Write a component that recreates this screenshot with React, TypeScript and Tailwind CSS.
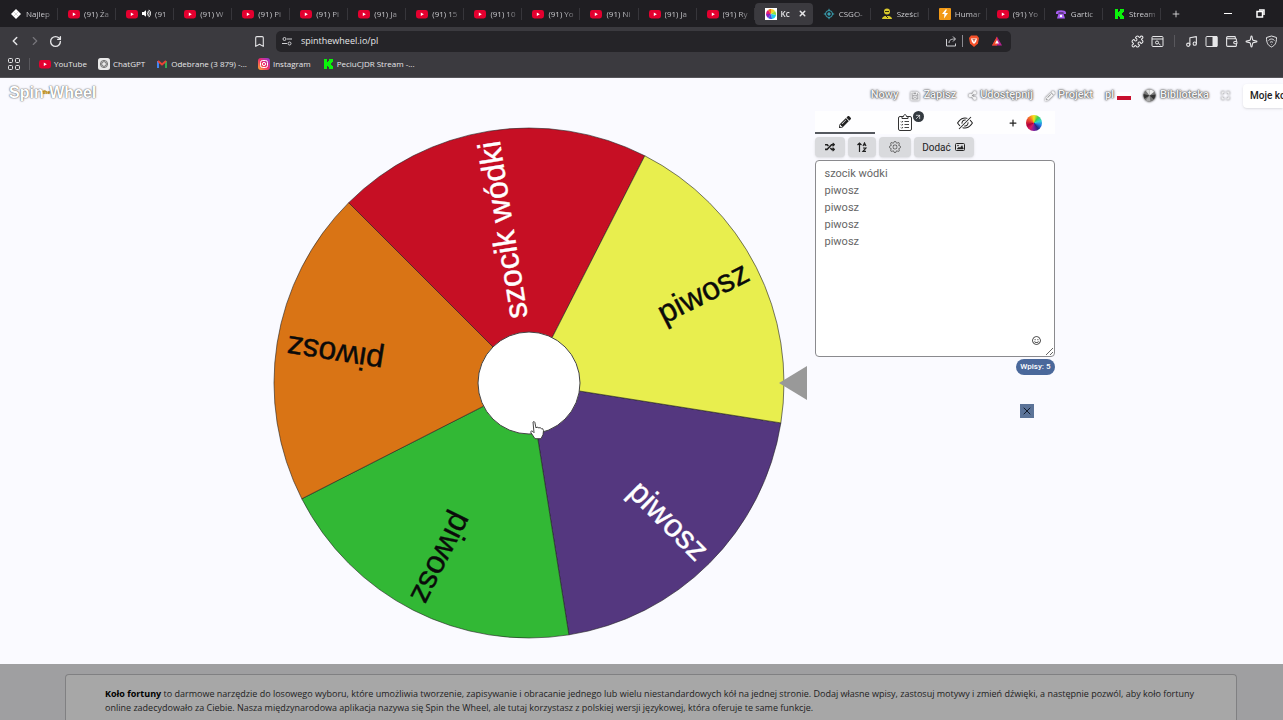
import React, { useState } from 'react';
import { ArrowUpRight, Bookmark, ChevronLeft, ChevronRight, Music, Puzzle, RotateCw, Sparkle, Plus, X, Wallet } from 'lucide-react';
import { FaExpand, FaPencilAlt, FaRandom, FaRegSave, FaRegSmile, FaShareAlt, FaVolumeUp } from 'react-icons/fa';
import { BsEyeSlash, BsGear } from 'react-icons/bs';

const YouTubeIcon = () => (
  <svg viewBox="0 0 12 12" className="size-3 shrink-0">
    <rect y="2" width="12" height="8.4" rx="2.4" fill="#e4002f" />
    <path d="M4.8 4.4v3.6l3-1.8z" fill="#fff" />
  </svg>
);

const KickIcon = () => (
  <svg viewBox="0 0 12 12" className="size-3 shrink-0">
    <path d="M2 1h3v3h1V3h1V1h4v3h-1v1H9v2h1v1h1v3H7V9H6V8H5v3H2z" fill="#0bf30b" />
  </svg>
);

const WheelIcon = () => (
  <svg viewBox="0 0 12 12" className="size-3 shrink-0">
    <rect width="12" height="12" fill="#fff" />
    <path d="M6 6V1a5 5 0 0 1 4 2z" fill="#f5d328" />
    <path d="M6 6l4-3a5 5 0 0 1 1 4z" fill="#8fe23d" />
    <path d="M6 6l5 1a5 5 0 0 1-4 4z" fill="#20c9e8" />
    <path d="M6 6l1 5a5 5 0 0 1-4-1z" fill="#3553e8" />
    <path d="M6 6l-3 4a5 5 0 0 1-2-4z" fill="#8420bf" />
    <path d="M6 6H1a5 5 0 0 1 2-4z" fill="#e11b78" />
    <path d="M6 6L3 2a5 5 0 0 1 3-1z" fill="#f26a1c" />
  </svg>
);

const DiceIcon = () => (
  <svg viewBox="0 0 12 12" className="size-3 shrink-0">
    <path d="M6 1l5 5-5 5-5-5z" fill="#fff" />
    <path d="M4 4l4 4M8 4L4 8" stroke="#bbb" strokeWidth=".6" />
  </svg>
);

const TargetIcon = () => (
  <svg viewBox="0 0 12 12" className="size-3 shrink-0" fill="none" stroke="#3aa3b5">
    <circle cx="6" cy="6" r="3.5" />
    <path d="M6 .8v2M6 9.200v2M.8 6h2M9.200 6h2" />
    <circle cx="6" cy="6" r="1.2" fill="#3aa3b5" />
  </svg>
);

const PersonIcon = () => (
  <svg viewBox="0 0 12 12" className="size-3 shrink-0" fill="#d9c92c">
    <circle cx="6" cy="3.6" r="3" />
    <path d="M1 11c0-2 2-2.6 3-3h4c1 .4 3 1 3 3z" />
    <path d="M4 3.5h4M5 8l2 2" stroke="#33300c" />
  </svg>
);

const BoltIcon = () => (
  <svg viewBox="0 0 12 12" className="size-3 shrink-0">
    <rect width="12" height="12" rx="1" fill="#f39a16" />
    <path d="M6.5 1.5L3 6h2.400L5 10.500 9 5H6.200L8 1.500z" fill="#fff" />
  </svg>
);

const PhoneIcon = () => (
  <svg viewBox="0 0 12 12" className="size-3 shrink-0">
    <path d="M1 4.5C1 1.5 11 1.5 11 4.5V6H8.500V4.500h-5V6H1z" fill="#a55cf0" />
    <path d="M3.5 5.5h5L10 10.500H2z" fill="#a55cf0" />
    <circle cx="6" cy="8" r="1.2" fill="#fff" />
  </svg>
);

const ChatIcon = () => (
  <svg viewBox="0 0 12 12" className="size-3 shrink-0">
    <rect width="12" height="12" rx="2.5" fill="#e9e9e9" />
    <g fill="none" stroke="#555" strokeWidth=".8">
      <circle cx="6" cy="6" r="3.6" />
      <path d="M6 3.5l2.200 1.200v2.600L6 8.500 3.800 7.300V4.700z" />
    </g>
  </svg>
);

const MailIcon = () => (
  <svg viewBox="0 0 12 12" className="size-3 shrink-0" fill="none" strokeWidth="2">
    <path d="M2 10V3" stroke="#4285f4" />
    <path d="M10 10V3" stroke="#34a853" />
    <path d="M2 3l4 3.500L10 3" stroke="#ea4335" />
  </svg>
);

const InstagramIcon = () => (
  <svg viewBox="0 0 12 12" className="size-3 shrink-0">
    <defs>
      <linearGradient id="insta" x1="0" y1="1" x2="1" y2="0">
        <stop offset="0" stopColor="#fdb32b" />
        <stop offset=".5" stopColor="#ee2a6b" />
        <stop offset="1" stopColor="#8a3ae0" />
      </linearGradient>
    </defs>
    <rect width="12" height="12" rx="3" fill="url(#insta)" />
    <g fill="none" stroke="#fff">
      <rect x="2.5" y="2.5" width="7" height="7" rx="2" />
      <circle cx="6" cy="6" r="1.6" />
    </g>
  </svg>
);

interface Tab {
  title: string;
  icon: React.FC;
  active?: boolean;
  sound?: boolean;
}

const tabs: Tab[] = [
  { title: 'Najlep', icon: DiceIcon },
  { title: '(91) Ża', icon: YouTubeIcon },
  { title: '(91', icon: YouTubeIcon, sound: true },
  { title: '(91) W', icon: YouTubeIcon },
  { title: '(91) Pi', icon: YouTubeIcon },
  { title: '(91) Pi', icon: YouTubeIcon },
  { title: '(91) Ja', icon: YouTubeIcon },
  { title: '(91) 15', icon: YouTubeIcon },
  { title: '(91) 10', icon: YouTubeIcon },
  { title: '(91) Yo', icon: YouTubeIcon },
  { title: '(91) Ni', icon: YouTubeIcon },
  { title: '(91) Ja', icon: YouTubeIcon },
  { title: '(91) Ry', icon: YouTubeIcon },
  { title: 'Kc', icon: WheelIcon, active: true },
  { title: 'CSGO-', icon: TargetIcon },
  { title: 'Sześci', icon: PersonIcon },
  { title: 'Humar', icon: BoltIcon },
  { title: '(91) Yo', icon: YouTubeIcon },
  { title: 'Gartic', icon: PhoneIcon },
  { title: 'Stream', icon: KickIcon },
];

const bookmarks = [
  { label: 'YouTube', icon: YouTubeIcon },
  { label: 'ChatGPT', icon: ChatIcon },
  { label: 'Odebrane (3 879) -...', icon: MailIcon },
  { label: 'Instagram', icon: InstagramIcon },
  { label: 'PeciuCJDR Stream -...', icon: KickIcon },
];

const BrowserChrome = () => (
  <header className="border-b border-[#56555a] bg-[#3b3a3f] font-['Open_Sans',sans-serif] text-[8px] text-[#e6e6e8]">
    <div className="flex h-[27px] items-center bg-[#1f1e22]">
      <div className="flex min-w-0 flex-1" role="tablist">
        {tabs.map(({ title, icon: Icon, active, sound }, i) => (
          <button
            key={i}
            role="tab"
            aria-selected={!!active}
            className={`flex h-[22px] min-w-0 flex-1 basis-0 items-center gap-1 text-left ${
              active ? 'rounded bg-[#3b3a3f] font-semibold' : 'font-medium text-[#cbcbcf]'
            }`}
          >
            <span className="pl-[10px]"><Icon /></span>
            {sound && <FaVolumeUp className="size-[9px] shrink-0 text-white" />}
            <span className="min-w-0 flex-1 whitespace-nowrap [mask-image:linear-gradient(to_right,#000_60%,#0004)]">{title}</span>
            {active ? <X className="mr-[6px] size-[9px] shrink-0" strokeWidth={4} /> : <span className="h-3 w-px shrink-0 bg-[#37363b]" />}
          </button>
        ))}
      </div>
      <div className="flex w-[122px] items-center">
        <button aria-label="Nowa karta" className="ml-[10px]"><Plus size={10} /></button>
        <button aria-label="Minimalizuj" className="ml-[43px] h-px w-2 bg-white" />
        <button aria-label="Przywróć" className="ml-6">
          <svg viewBox="0 0 9 9" className="size-[9px]" fill="none" stroke="#fff" strokeWidth="1.5">
            <rect x="1" y="2.5" width="5.5" height="5.5" />
            <path d="M3 1h5v5" />
          </svg>
        </button>
      </div>
    </div>

    <div className="flex h-7 items-center pr-[5px] pl-2">
      <button aria-label="Wstecz"><ChevronLeft size={14} strokeWidth={2.5} /></button>
      <button aria-label="Dalej" className="ml-[6px] text-[#77767b]"><ChevronRight size={14} /></button>
      <button aria-label="Odśwież" className="ml-[7px]"><RotateCw size={13} strokeWidth={2.5} /></button>
      <button aria-label="Zakładka" className="ml-[191px]"><Bookmark size={13} strokeWidth={2} /></button>
      <div className="ml-[10px] flex h-[21px] w-[735px] items-center rounded-[5px] bg-[#252428] px-[6px]">
        <svg viewBox="0 0 10 10" className="size-[10px]" fill="none" stroke="#d0d0d4">
          <circle cx="2.5" cy="3" r="1.5" />
          <path d="M5 3h5M0 7.500h5" />
          <circle cx="7.5" cy="7.5" r="1.5" />
        </svg>
        <input
          aria-label="Adres"
          defaultValue="spinthewheel.io/pl"
          className="ml-[9px] min-w-0 flex-1 bg-transparent text-[9px] font-medium outline-none"
        />
        <svg viewBox="0 0 12 12" className="size-3" fill="none" stroke="#d0d0d4">
          <path d="M1.500 4v7h9V8.500M4 8c0-3 2-4 6-4M8 1.500L10.500 4 8 6.500" />
        </svg>
        <span className="mx-[5px] h-3 w-px bg-[#8b8a90]" />
        <svg viewBox="0 0 12 12" className="size-3">
          <path d="M3 .5h6l2 2.500-1 5.500L6 12 2 8.500 1 3z" fill="#f5512a" />
          <path d="M3 3.500h6L8 7 6 9 4 7z" fill="#fff" />
          <path d="M4.500 4.500l1.500 1 1.500-1M6 6v1" stroke="#f5512a" strokeWidth=".7" />
        </svg>
        <svg viewBox="0 0 12 12" className="mr-[2px] ml-[11px] size-3">
          <path d="M6 1.500L11 10.500H1z" fill="#b5218e" />
          <path d="M6 1.500L1 10.500h5z" fill="#f04b24" />
          <path d="M6 5l2 3.500H4z" fill="#fff" />
        </svg>
      </div>
      <div className="ml-auto flex items-center gap-[7px]">
        <Puzzle size={13} />
        <svg viewBox="0 0 13 13" className="size-[13px]" fill="none" stroke="currentColor">
          <rect x="1" y="1.5" width="11" height="10" rx="1" />
          <path d="M1 4h11M7.500 8.500l2 1.500" />
          <circle cx="6" cy="7.5" r="1.5" />
        </svg>
        <span className="mx-[3px] h-3 w-px bg-[#59585d]" />
        <Music size={13} />
        <svg viewBox="0 0 13 13" className="size-[13px]" fill="none" stroke="currentColor">
          <rect x="1" y="1.5" width="11" height="10" rx="1" />
          <path d="M8 1.500h4v10H8z" fill="currentColor" />
        </svg>
        <Wallet size={13} />
        <Sparkle size={13} />
        <svg viewBox="0 0 13 13" className="size-[13px]" fill="none" stroke="currentColor">
          <path d="M6.500 1L11.500 2.500C11.500 8 10 10.500 6.500 12 3 10.500 1.500 8 1.500 2.500z" />
          <path d="M3.500 5.500c2-2 4-2 6 0M5 7.500c1-1 2-1 3 0M6.500 9v.5" />
        </svg>
      </div>
    </div>

    <nav className="flex h-[22px] items-center pb-1 pl-2">
      <button aria-label="Aplikacje">
        <svg viewBox="0 0 12 12" className="size-3" fill="none" stroke="currentColor">
          <rect x=".5" y=".5" width="4" height="4" rx="1" />
          <rect x="7.5" y=".5" width="4" height="4" rx="1" />
          <rect x=".5" y="7.5" width="4" height="4" rx="1" />
          <rect x="7.5" y="7.5" width="4" height="4" rx="1" />
        </svg>
      </button>
      <span className="ml-[9px] h-3 w-px bg-[#59585d]" />
      <div className="ml-[9px] flex gap-[11px]">
        {bookmarks.map(({ label, icon: Icon }) => (
          <a key={label} href="#" className="flex items-center gap-[3px] font-medium">
            <Icon />
            {label}
          </a>
        ))}
      </div>
    </nav>
  </header>
);

const navLink =
  'flex items-center gap-[3px] text-[#f4f4f6] [text-shadow:0_0_1px_#444,0_0_2px_#555,0_0_3px_#888] [&_svg]:drop-shadow-[0_0_1px_#333]';

const SiteNav = () => (
  <nav className="flex h-[31px] items-center pt-1 pl-[9px] text-[11px] font-medium">
    <a
      href="#"
      className="flex items-center pb-[6px] font-['Liberation_Sans',sans-serif] text-base font-bold text-white [text-shadow:0_0_1px_#555,0_0_2px_#777]"
    >
      Spin
      <span className="-mx-px text-[5px] text-[#b8860b] [text-shadow:0_0_1px_#b8860b]">the</span>
      Wheel
    </a>
    <div className="ml-auto flex items-center gap-3">
      <a href="#" className={navLink}>Nowy</a>
      <a href="#" className={navLink}><FaRegSave size={10} />Zapisz</a>
      <a href="#" className={navLink}><FaShareAlt size={9} />Udostępnij</a>
      <a href="#" className={navLink}><FaPencilAlt size={10} />Projekt</a>
      <a href="#" className={navLink}>
        pl
        <span className="flex h-2 w-[14px] flex-col bg-white pt-1">
          <span className="flex-1 bg-[#c8102e]" />
        </span>
      </a>
      <a href="#" className={navLink}>
        <svg viewBox="0 0 14 14" className="mr-px size-[13px]">
          <circle cx="7" cy="7" r="6.5" fill="#777" />
          <path d="M7 7V.5A6.500 6.500 0 0 1 12 3z" fill="#eee" />
          <path d="M7 7l6.500-1a6.500 6.500 0 0 1-2 5z" fill="#333" />
          <path d="M7 7l1 6.500a6.500 6.500 0 0 1-5-1.500z" fill="#aaa" />
          <path d="M7 7L.7 5.500a6.500 6.500 0 0 0 1 5z" fill="#333" />
          <path d="M7 7L3 2a6.500 6.500 0 0 1 4-1.500z" fill="#ddd" />
        </svg>
        Biblioteka
      </a>
      <a href="#" aria-label="Pełny ekran" className={navLink}><FaExpand size={9} /></a>
      <a href="#" className="ml-px h-6 w-10 rounded-l bg-white pl-[7px] text-[10px] leading-6 whitespace-nowrap text-[#222] shadow">
        Moje ko
      </a>
    </div>
  </nav>
);

const slices = [
  { label: 'piwosz', fill: '#54377f', color: '#ffffff', angle: 45 },
  { label: 'piwosz', fill: '#32b835', color: '#0a0a0a', angle: 117 },
  { label: 'piwosz', fill: '#d97415', color: '#0a0a0a', angle: 189 },
  { label: 'szocik wódki', fill: '#c60f24', color: '#ffffff', angle: 261 },
  { label: 'piwosz', fill: '#e8ee4e', color: '#0a0a0a', angle: 333 },
];

const RADIUS = 255;

const point = (deg: number) => {
  const rad = (deg * Math.PI) / 180;
  return `${RADIUS * Math.cos(rad)} ${RADIUS * Math.sin(rad)}`;
};

const Wheel = () => (
  <svg viewBox="-256 -256 534 512" className="mt-[18px] h-[512px] w-[534px] shrink-0">
    {slices.map(({ fill, angle }) => (
      <path
        key={angle}
        d={`M0 0L${point(angle - 36)}A${RADIUS} ${RADIUS} 0 0 1 ${point(angle + 36)}Z`}
        fill={fill}
        stroke="#222"
        strokeOpacity=".6"
        strokeWidth="1"
      />
    ))}
    {slices.map(({ label, color, angle }) => (
      <text
        key={angle}
        x="245"
        y="9"
        textAnchor="end"
        fill={color}
        stroke={color}
        strokeWidth=".4"
        transform={`rotate(${angle})`}
        className="font-['Liberation_Sans',sans-serif] text-[32px]"
      >
        {label}
      </text>
    ))}
    <circle r="51" fill="#fff" stroke="#444" strokeWidth="1" />
    <path d="M250 0L278-17V17z" fill="#999" />
    {/* hand pointer */}
    <path
      d="M4 39c1-1 2 0 2 1l1 5 1-1 2 1 1-.5 1.500 1.200 1.200 0 .8 2-.5 4-2 4H6l-4-6c-1-2 1-2 2-1l1 1z"
      fill="#fff"
      stroke="#333"
      strokeWidth=".9"
    />
  </svg>
);

const toolButton = 'flex h-5 items-center justify-center rounded bg-[#d9dadd] text-[#222] shadow-sm';

const EntriesPanel = () => {
  const [entries, setEntries] = useState('szocik wódki\npiwosz\npiwosz\npiwosz\npiwosz');

  return (
    <section className="w-60 shrink-0 pt-[2px]">
      <div className="flex h-[23px] bg-white/70 text-[#222]">
        <button aria-label="Wpisy" className="flex w-[60px] items-center justify-center border-b-2 border-[#55595f]">
          <FaPencilAlt size={12} />
        </button>
        <button aria-label="Wyniki" className="relative flex w-[60px] items-center justify-center text-[#333]">
          <svg viewBox="0 0 14 17" className="h-[17px] w-[14px]" fill="none" stroke="currentColor">
            <rect x=".5" y="2.5" width="13" height="14" rx="1.5" />
            <path d="M4 4.500V2.500h1.500C5.500 0 8.500 0 8.500 2.500H10v2z" fill="#fff" />
            <path d="M3 7.500l.8.800L5 7M3 10.500l.8.800L5 10M3 13.500l.8.800L5 13M6.500 7.500H11M6.500 10.500H11M6.500 13.500H11" strokeWidth=".9" />
          </svg>
          <span className="absolute top-0 right-[11px] flex size-[11px] items-center justify-center rounded-full bg-[#343a40]">
            <ArrowUpRight size={8} color="#fff" />
          </span>
        </button>
        <button aria-label="Ukryj" className="flex w-[60px] items-center justify-center">
          {/* the slash leans to the right */}
          <BsEyeSlash size={16} className="-scale-x-100" />
        </button>
        <button aria-label="Dodaj koło" className="flex flex-1 items-center justify-center gap-2">
          <Plus size={10} strokeWidth={3} />
          <span className="size-4 rounded-full bg-[conic-gradient(#f8e71c,#3ccf4e,#2fd6d0,#2478e8,#222a80,#7a1fa0,#d81b60,#b0003a,#e53935,#f57c1f,#f8e71c)]" />
        </button>
      </div>

      <div className="my-[3px] flex gap-[3px]">
        <button aria-label="Losuj kolejność" className={`${toolButton} w-[30px]`}><FaRandom size={10} /></button>
        <button aria-label="Sortuj" className={`${toolButton} w-[28px]`}>
          <svg viewBox="0 0 10 10" className="size-[10px]" fill="none" stroke="currentColor" strokeWidth="1.2">
            <path d="M2.500 10V1M.5 3l2-2 2 2M6 4l1.500-3L9 4M6.300 3h2.400M6 6h3L6 9.400h3" />
          </svg>
        </button>
        <button aria-label="Ustawienia" className={`${toolButton} w-8`}><BsGear size={12} color="#555" /></button>
        <button className={`${toolButton} w-[60px] gap-1 text-[10px]`}>
          Dodać
          <svg viewBox="0 0 10 8" className="h-2 w-[10px]" fill="none" stroke="currentColor">
            <rect x=".5" y=".5" width="9" height="7" rx="1" />
            <path d="M2 6l2-2 1 1 2-2.500L8.500 6z" fill="currentColor" strokeWidth=".4" />
            <circle cx="3" cy="2.6" r=".4" />
          </svg>
        </button>
      </div>

      <div className="relative">
        <textarea
          aria-label="Lista wpisów"
          value={entries}
          onChange={(e) => setEntries(e.target.value)}
          spellCheck={false}
          className="block h-[197px] w-full resize rounded border border-[#8a8a8e] bg-white px-[9px] py-1 text-[11px] leading-[17px] text-[#666] outline-none"
        />
        <button aria-label="Emoji" className="absolute right-[14px] bottom-3"><FaRegSmile size={9} color="#333" /></button>
      </div>

      <div className="mt-[2px] flex flex-col items-end">
        <span className="rounded-full bg-[#4a689b] px-1 text-[8px] leading-4 font-medium text-white">
          Wpisy: {entries.split('\n').length}
        </span>
        <button aria-label="Zamknij" className="mt-[29px] mr-[21px] flex size-[14px] items-center justify-center bg-[#5b7398] text-[#111a2b]">
          <X size={12} strokeWidth={2} />
        </button>
      </div>
    </section>
  );
};

export default function App() {
  return (
    <div className="flex h-screen flex-col overflow-hidden bg-[#fafaff] font-['Roboto',sans-serif]">
      <BrowserChrome />
      <SiteNav />
      <main className="flex min-h-0 flex-1 justify-center gap-2 pl-[44px]">
        <Wheel />
        <EntriesPanel />
      </main>
      <footer className="bg-[#9f9fa1] pt-[10px] pr-[46px] pl-[65px]">
        <div className="rounded-t border border-b-0 border-[#808082] bg-[#a7a7a7] px-[39px] pt-3 pb-[5px] font-['Open_Sans','Roboto',sans-serif] text-[9px] leading-[14px] text-[#222]">
          <p>
            <b className="text-black">Koło fortuny</b> to darmowe narzędzie do losowego wyboru, które umożliwia tworzenie, zapisywanie i
            obracanie jednego lub wielu niestandardowych kół na jednej stronie. Dodaj własne wpisy, zastosuj motywy i zmień dźwięki, a
            następnie pozwól, aby koło fortuny online zadecydowało za Ciebie. Nasza międzynarodowa aplikacja nazywa się Spin the Wheel, ale
            tutaj korzystasz z polskiej wersji językowej, która oferuje te same funkcje.
          </p>
        </div>
      </footer>
    </div>
  );
}
